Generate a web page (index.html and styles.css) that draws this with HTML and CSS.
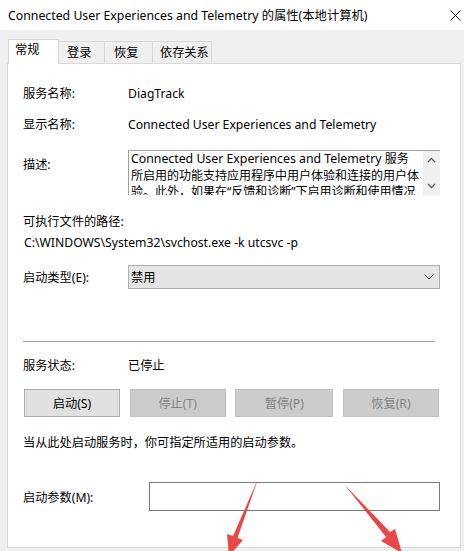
FILE: index.html
```html
<!DOCTYPE html>
<html>
<head>
<meta charset="utf-8">
<link rel="stylesheet" href="styles.css">
</head>
<body>
<div class="window">
  <div class="titlebar">
    <span class="title">Connected User Experiences and Telemetry 的属性(本地计算机)</span>
    <svg class="close" width="11" height="11" viewBox="0 0 11 11"><path d="M0.5 0.5 L10.5 10.5 M10.5 0.5 L0.5 10.5" stroke="#000" stroke-width="1" fill="none"/></svg>
  </div>
  <div class="content">
    <div class="tabs">
      <div class="tab active">常规</div>
      <div class="tab t2">登录</div>
      <div class="tab t3">恢复</div>
      <div class="tab t4">依存关系</div>
    </div>
    <div class="panel">
      <div class="row r1"><span class="label">服务名称:</span><span class="value">DiagTrack</span></div>
      <div class="row r2"><span class="label">显示名称:</span><span class="value">Connected User Experiences and Telemetry</span></div>
      <div class="row desc-row">
        <span class="label desc-label">描述:</span>
        <div class="desc-box">
          <div class="desc-text"><span class="lat">Connected User Experiences and Telemetry</span> 服务所启用的功能支持应用程序中用户体验和连接的用户体验。此外，如果在“反馈和诊断”下启用诊断和使用情况</div>
          <div class="scroll">
            <svg width="9" height="6" viewBox="0 0 9 6"><path d="M1 5 L4.5 1.5 L8 5" stroke="#606060" stroke-width="1.3" fill="none"/></svg>
            <svg width="9" height="6" viewBox="0 0 9 6"><path d="M1 1 L4.5 4.5 L8 1" stroke="#606060" stroke-width="1.3" fill="none"/></svg>
          </div>
        </div>
      </div>
      <div class="line path-label">可执行文件的路径:</div>
      <div class="line path">C:\WINDOWS\System32\svchost.exe -k utcsvc -p</div>
      <div class="row start-row">
        <span class="label">启动类型(E):</span>
        <div class="select"><span>禁用</span>
          <svg width="10" height="6" viewBox="0 0 10 6"><path d="M0.5 0.5 L5 5 L9.5 0.5" stroke="#444" stroke-width="1" fill="none"/></svg>
        </div>
      </div>
      <div class="sep"></div>
      <div class="row status-row"><span class="label">服务状态:</span><span class="value">已停止</span></div>
      <div class="buttons">
        <div class="btn">启动(S)</div>
        <div class="btn disabled">停止(T)</div>
        <div class="btn disabled wide">暂停(P)</div>
        <div class="btn disabled">恢复(R)</div>
      </div>
      <div class="line hint">当从此处启动服务时，你可指定所适用的启动参数。</div>
      <div class="row param-row">
        <span class="label">启动参数(M):</span>
        <div class="input"></div>
      </div>
    </div>
  </div>
  <svg class="arrows" width="464" height="551" viewBox="0 0 464 551">
    <polygon points="258,479 237.5,538 243,540 229,556 227,534 233,536" fill="#e84848"/>
    <polygon points="344,484 390,532 395,529 402,553 381,541 386,537" fill="#e84848"/>
  </svg>
</div>
</body>
</html>
```

FILE: styles.css
```css
* { box-sizing: border-box; }
html, body { margin: 0; padding: 0; }
body {
  width: 464px;
  height: 551px;
  overflow: hidden;
  font-family: "Noto Sans", "Noto Sans CJK SC", sans-serif;
  font-size: 12.2px;
  color: #000;
  background: #f0f0f0;
}
.window { position: relative; width: 464px; height: 551px; }
.titlebar {
  height: 30px;
  background: #fff;
  display: flex;
  align-items: center;
  justify-content: space-between;
  padding: 0 3px 1px 8px;
}
.title { font-size: 12.3px; white-space: nowrap; }
.close { margin-top: 1px; }
.content {
  background: #f0f0f0;
  padding: 9px 3px 0 7px;
}
.tabs {
  display: flex;
  align-items: flex-end;
  height: 24px;
  padding-left: 1px;
  position: relative;
  z-index: 1;
}
.tab {
  height: 22px;
  border: 1px solid #d9d9d9;
  border-bottom: none;
  border-left: none;
  background: #f0f0f0;
  padding: 3px 0 0 8px;
  line-height: 16px;
}
.tab.active {
  height: 25px;
  margin-bottom: -1px;
  background: #fff;
  border-left: 1px solid #d9d9d9;
  width: 51px;
  padding: 2px 0 0 6px;
}
.t2 { width: 46px; }
.t3 { width: 48px; padding-left: 9px; }
.t4 { width: 59px; padding-left: 7px; }
.panel {
  width: 454px;
  height: 485px;
  background: #fff;
  border: 1px solid #d9d9d9;
  padding: 0 0 0 15px;
}
.row { display: flex; align-items: center; }
.label { width: 105px; flex: none; white-space: nowrap; }
.value { white-space: nowrap; }
.r1 { height: 20px; margin-top: 19px; }
.r2 { height: 20px; margin-top: 11px; }
.desc-row { align-items: flex-start; margin-top: 16px; height: 45px; }
.desc-label { padding-top: 7px; line-height: 16px; }
.desc-box {
  width: 312px;
  height: 45px;
  border-top: 1px solid #a0a0a0;
  border-left: 1px solid #a0a0a0;
  display: flex;
  overflow: hidden;
}
.desc-text {
  flex: none;
  width: 290px;
  padding: 0 0 0 2px;
  font-size: 12px;
  line-height: 16.5px;
  overflow: hidden;
  height: 44px;
}
.desc-text .lat { font-size: 12.3px; }
.scroll {
  margin-left: auto;
  width: 17px;
  height: 44px;
  background: #f0f0f0;
  display: flex;
  flex-direction: column;
  align-items: center;
  justify-content: space-between;
  padding: 6px 0 6px;
}
.line { height: 20px; line-height: 20px; white-space: nowrap; }
.path-label { margin-top: 17px; }
.path { margin-top: 1px; padding-left: 1px; }
.start-row { margin-top: 12px; }
.select {
  width: 312px;
  height: 24px;
  background: #e5e5e5;
  border: 1px solid #adadad;
  display: flex;
  align-items: center;
  justify-content: space-between;
  padding: 0 5px 0 2px;
}
.sep {
  margin-top: 52px;
  width: 412px;
  height: 1px;
  background: #a0a0a0;
}
.status-row { height: 20px; margin-top: 13px; }
.buttons {
  margin-top: 14px;
  margin-left: 1px;
  width: 415px;
  display: flex;
  justify-content: space-between;
}
.btn {
  width: 96px;
  height: 28px;
  border: 1px solid #adadad;
  background: #e1e1e1;
  display: flex;
  align-items: center;
  justify-content: center;
}
.btn.wide { width: 98px; }
.btn.disabled {
  background: #cccccc;
  border-color: #bfbfbf;
  color: #838383;
}
.hint { margin-top: 16px; }
.param-row { margin-top: 29px; }
.param-row .label { width: 126px; }
.input {
  width: 291px;
  height: 29px;
  border: 1px solid #7a7a7a;
  background: #fff;
}
.arrows { position: absolute; left: 0; top: 0; pointer-events: none; }
```
